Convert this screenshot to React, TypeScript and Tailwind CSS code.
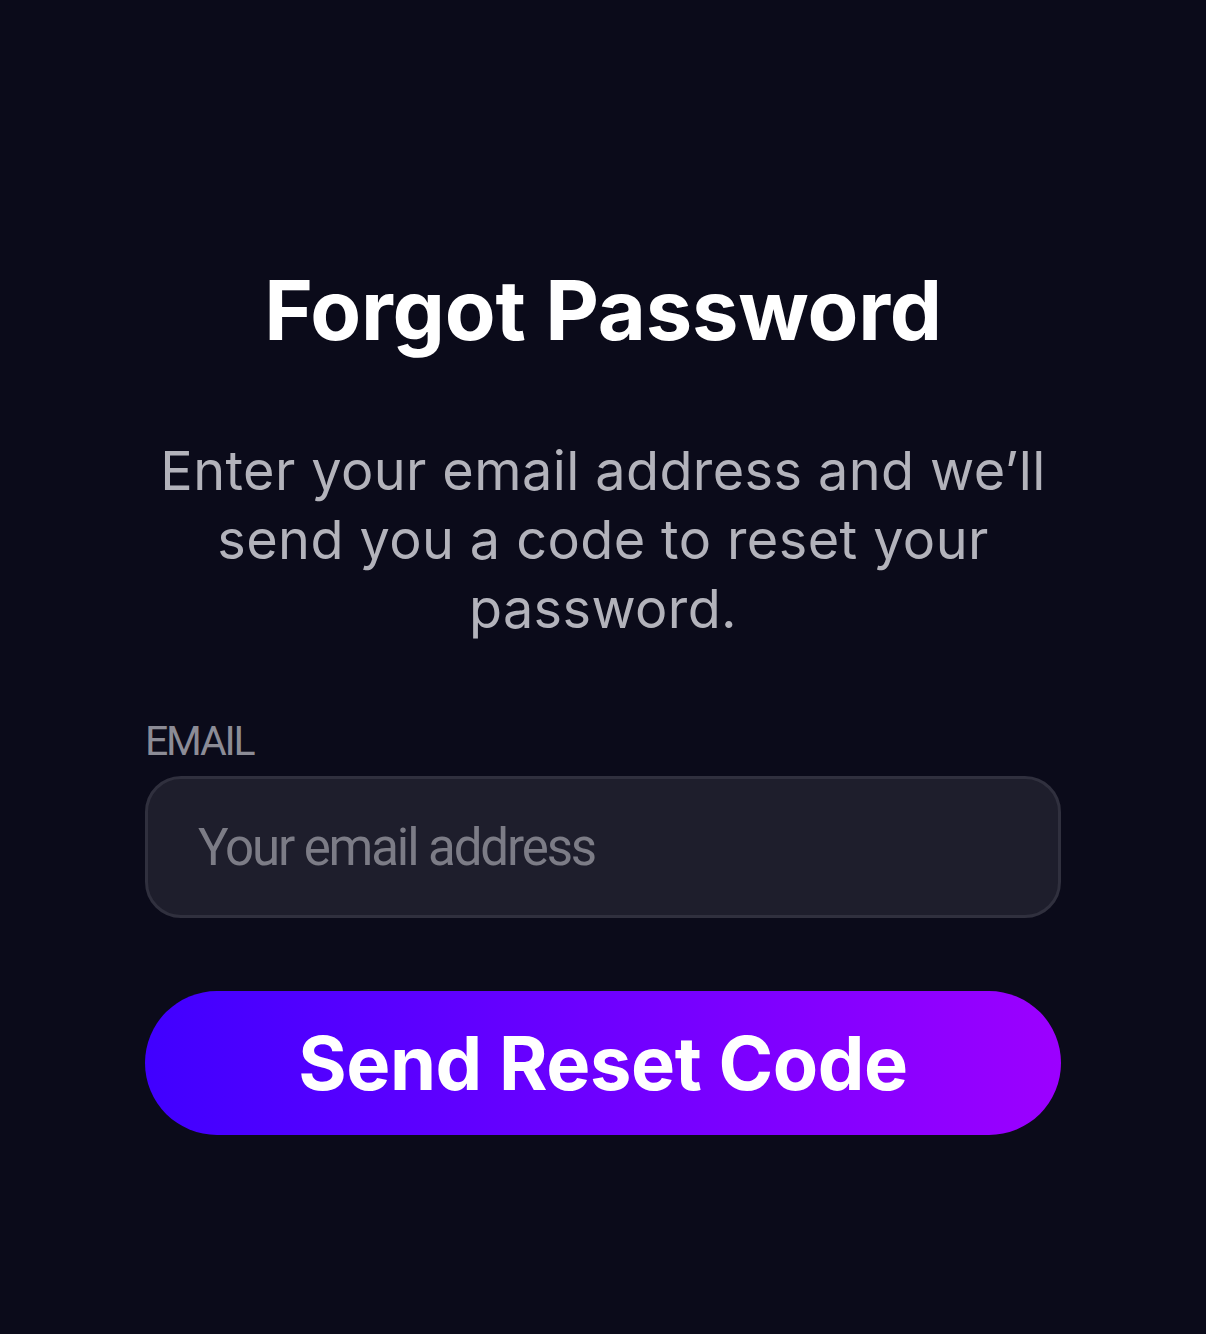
export default function App() {
  return (
    <div className="min-h-screen w-full bg-[#0b0b1a] px-[145px] pt-[262px] font-['Inter',sans-serif]">
      <h1 className="text-center text-[83px] leading-[96px] font-bold tracking-[-0.2px] text-white">
        Forgot Password
      </h1>
      <p className="mx-auto mt-[78px] max-w-[900px] text-center text-[54px] leading-[69px] tracking-[0.4px] text-[#b3b3bb]">
        Enter your email address and we’ll send you a code to reset your password.
      </p>
      <label className="mt-[72px] block font-['Roboto',sans-serif] text-[41px] leading-[52px] tracking-[-2.2px] text-[#8c8c96] uppercase">
        Email
      </label>
      <input
        type="email"
        placeholder="Your email address"
        className="mt-[9px] h-[142px] w-full rounded-[36px] border-[3px] border-[#30303e] bg-[#1e1e2c] px-[50px] font-['Roboto',sans-serif] text-[51px] tracking-[-2.1px] text-white outline-none placeholder:text-[#7c7c86]"
      />
      <button className="mt-[73px] h-[144px] w-full rounded-full bg-linear-to-r/srgb from-[#4000ff] to-[#9c00ff] text-[74px] font-bold tracking-[-0.4px] text-white">
        Send Reset Code
      </button>
    </div>
  );
}
